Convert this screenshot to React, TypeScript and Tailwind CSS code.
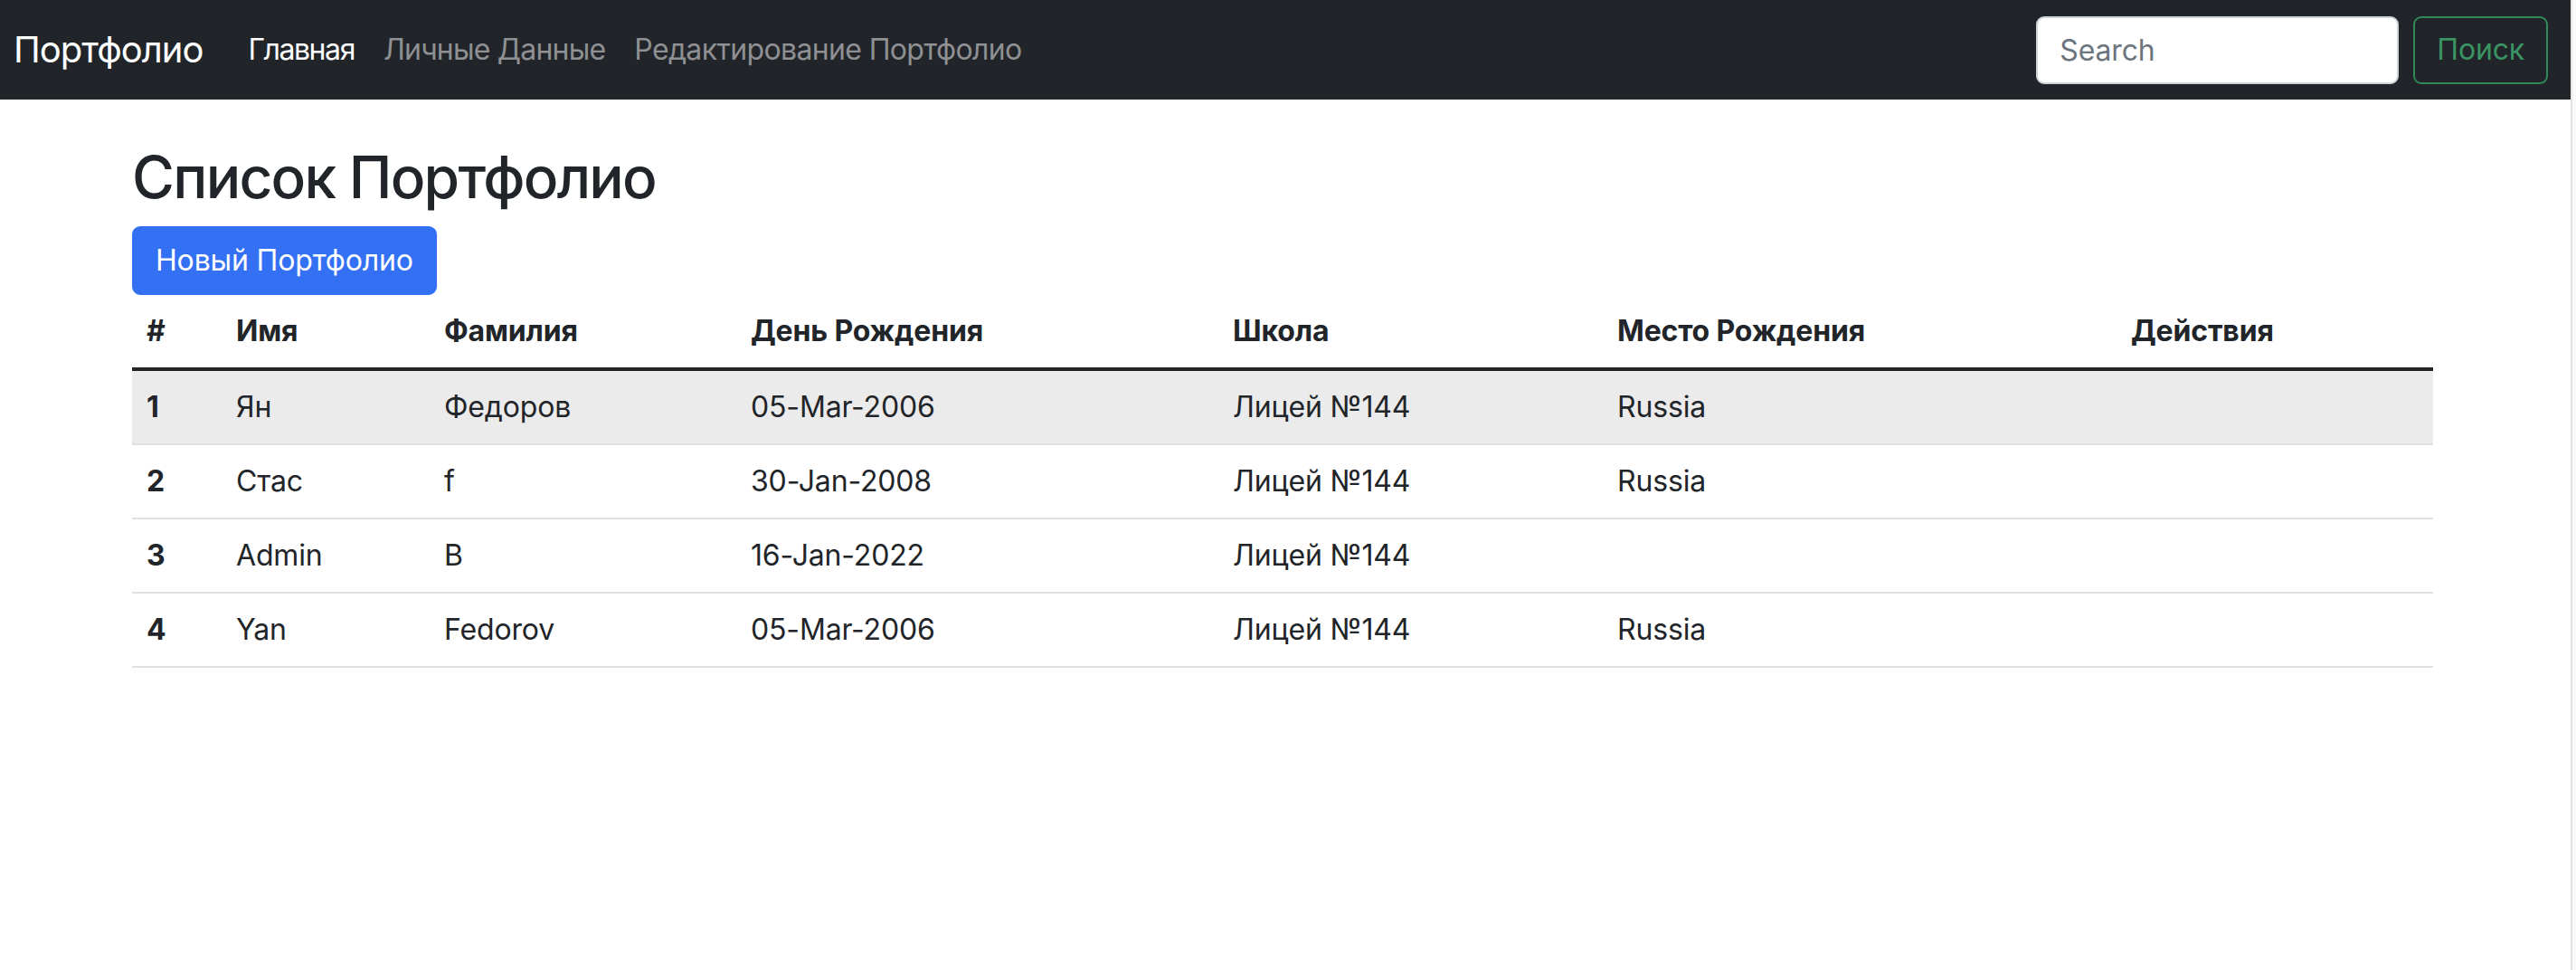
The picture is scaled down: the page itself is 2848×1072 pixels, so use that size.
import React from 'react';

const rows = [
    { id: 1, first: 'Ян', last: 'Федоров', birthday: '05-Mar-2006', school: 'Лицей №144', place: 'Russia' },
    { id: 2, first: 'Стас', last: 'f', birthday: '30-Jan-2008', school: 'Лицей №144', place: 'Russia' },
    { id: 3, first: 'Admin', last: 'B', birthday: '16-Jan-2022', school: 'Лицей №144', place: '' },
    { id: 4, first: 'Yan', last: 'Fedorov', birthday: '05-Mar-2006', school: 'Лицей №144', place: 'Russia' },
];

const App = () => {
    return (
        <div className="flex h-[1072px] w-full overflow-hidden bg-white font-['Inter','Liberation_Sans',sans-serif] text-[#212529] tracking-[-0.01em]">
            <div className="flex flex-1 flex-col">
                {/* navbar */}
                <nav className="flex h-[110px] items-center bg-[#212529] pl-[15px] pr-[25px]">
                    <span className="mr-[34px] text-[40px] leading-[60px] tracking-[-0.025em] text-white">Портфолио</span>
                    <a className="px-4 text-[32px] leading-[48px] tracking-[-0.045em] text-white">Главная</a>
                    <a className="px-4 text-[32px] leading-[48px] tracking-[-0.025em] text-[#8e9093]">Личные Данные</a>
                    <a className="px-4 text-[32px] leading-[48px] tracking-[-0.02em] text-[#8e9093]">Редактирование Портфолио</a>

                    <form className="ml-auto flex items-center gap-4">
                        <input
                            placeholder="Search"
                            className="h-[75px] w-[401px] rounded-[9px] border-2 border-[#ced4da] bg-white px-6 text-[32px] text-[#212529] outline-none placeholder:text-[#6c757d]"
                        />
                        <button className="h-[75px] rounded-[9px] border-2 border-[#2f8a57] px-6 text-[32px] text-[#3a9463]">
                            Поиск
                        </button>
                    </form>
                </nav>

                {/* content */}
                <main className="ml-[146px] w-[2544px] pt-[47px]">
                    <h2 className="mb-4 text-[64px] font-medium leading-[77px] tracking-[-0.027em]">Список Портфолио</h2>
                    <button className="h-[76px] rounded-[9px] border-2 border-[#3470f3] bg-[#3470f3] px-6 text-[32px] leading-[48px] text-white">
                        Новый Портфолио
                    </button>

                    <table className="w-full table-fixed border-collapse text-left text-[32px] leading-[48px]">
                        <colgroup>
                            <col className="w-[99px]" />
                            <col className="w-[230px]" />
                            <col className="w-[339px]" />
                            <col className="w-[533px]" />
                            <col className="w-[425px]" />
                            <col className="w-[568px]" />
                            <col className="w-[350px]" />
                        </colgroup>
                        <thead>
                            <tr className="border-b-4 border-[#212529]">
                                <th className="p-4 font-bold">#</th>
                                <th className="p-4 font-bold">Имя</th>
                                <th className="p-4 font-bold">Фамилия</th>
                                <th className="p-4 font-bold">День Рождения</th>
                                <th className="p-4 font-bold">Школа</th>
                                <th className="p-4 font-bold">Место Рождения</th>
                                <th className="p-4 font-bold">Действия</th>
                            </tr>
                        </thead>
                        <tbody>
                            {rows.map((r, i) => (
                                <tr key={r.id} className={`border-b-2 border-[#dee2e6] ${i === 0 ? 'bg-[#ebebeb]' : ''}`}>
                                    <th className="p-4 font-bold">{r.id}</th>
                                    <td className="p-4">{r.first}</td>
                                    <td className="p-4">{r.last}</td>
                                    <td className="p-4">{r.birthday}</td>
                                    <td className="p-4">{r.school}</td>
                                    <td className="p-4">{r.place}</td>
                                    <td className="p-4"></td>
                                </tr>
                            ))}
                        </tbody>
                    </table>
                </main>
            </div>

            {/* scrollbar track */}
            <div className="w-[6px] border-l-2 border-[#e4e4e4] bg-[#fafafa]" />
        </div>
    );
};

export default App;
